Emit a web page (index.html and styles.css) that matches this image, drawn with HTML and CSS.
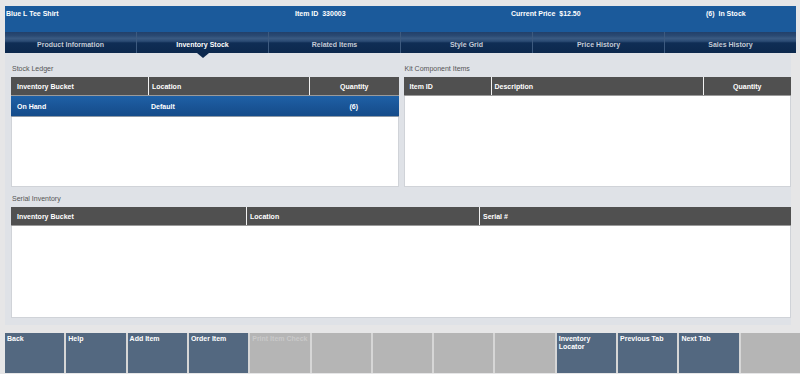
FILE: index.html
```html
<!DOCTYPE html>
<html>
<head>
  <meta charset="utf-8">
  <link rel="stylesheet" href="styles.css">
</head>
<body>
  <div class="top">
    <div class="header">
      <span class="item-name">Blue L Tee Shirt</span>
      <span>Item ID&nbsp;&nbsp;330003</span>
      <span>Current Price&nbsp;&nbsp;$12.50</span>
      <span>(6)&nbsp;&nbsp;In Stock</span>
    </div>
    <div class="tabs">
      <div class="tab">Product Information</div>
      <div class="tab active">Inventory Stock</div>
      <div class="tab">Related Items</div>
      <div class="tab">Style Grid</div>
      <div class="tab">Price History</div>
      <div class="tab">Sales History</div>
    </div>
  </div>

  <div class="content">
    <div class="split">
      <div class="panel">
        <div class="section-label">Stock Ledger</div>
        <div class="grid-table ledger">
          <div class="grid-head">
            <div class="cell">Inventory Bucket</div>
            <div class="cell">Location</div>
            <div class="cell center">Quantity</div>
          </div>
          <div class="grid-body">
            <div class="grid-row selected">
              <div class="cell">On Hand</div>
              <div class="cell">Default</div>
              <div class="cell center">(6)</div>
            </div>
          </div>
        </div>
      </div>
      <div class="panel">
        <div class="section-label">Kit Component Items</div>
        <div class="grid-table kit">
          <div class="grid-head">
            <div class="cell">Item ID</div>
            <div class="cell">Description</div>
            <div class="cell center">Quantity</div>
          </div>
          <div class="grid-body"></div>
        </div>
      </div>
    </div>

    <div class="section-label serial-label">Serial Inventory</div>
    <div class="grid-table serial">
      <div class="grid-head">
        <div class="cell">Inventory Bucket</div>
        <div class="cell">Location</div>
        <div class="cell">Serial #</div>
      </div>
      <div class="grid-body"></div>
    </div>
  </div>

  <div class="buttons">
    <div class="btn">Back</div>
    <div class="btn">Help</div>
    <div class="btn">Add Item</div>
    <div class="btn">Order Item</div>
    <div class="btn disabled">Print Item Check</div>
    <div class="btn disabled"></div>
    <div class="btn disabled"></div>
    <div class="btn disabled"></div>
    <div class="btn disabled"></div>
    <div class="btn">Inventory Locator</div>
    <div class="btn">Previous Tab</div>
    <div class="btn">Next Tab</div>
    <div class="btn disabled"></div>
  </div>
</body>
</html>
```

FILE: styles.css
```css
body {
  margin: 0;
  height: 374px;
  overflow: hidden;
  background: #e6e6e7;
  font-family: "Liberation Sans", Arial, sans-serif;
  font-size: 7px;
  color: #333;
}

.top {
  margin: 6px 4px 0 5px;
}

.header {
  height: 26px;
  box-sizing: border-box;
  padding: 3px 0 0 1px;
  background: #1b5a9b;
  color: white;
  font-weight: bold;
  line-height: 9px;
  display: grid;
  grid-template-columns: 289px 216px 195px 1fr;
}

.tabs {
  display: flex;
  height: 21px;
  background: linear-gradient(#22406a 0%, #2a4a73 18%, #3a5a82 30%, #2b4b74 44%, #0f2d55 52%, #0c284d 100%);
}

.tab {
  position: relative;
  flex: 1;
  display: flex;
  align-items: center;
  justify-content: center;
  padding-top: 3px;
  color: #c3cad5;
  font-weight: bold;
  border-left: 1px solid #3d5a7f;
}

.tab:first-child {
  border-left: none;
}

.tab.active {
  color: white;
}

.tab.active::after {
  content: "";
  position: absolute;
  left: 50%;
  bottom: -5px;
  margin-left: -6px;
  border-left: 6px solid transparent;
  border-right: 6px solid transparent;
  border-top: 5px solid #0c284d;
}

.content {
  margin: 0 9px 0 5px;
  padding: 0 0 7px 6px;
  background: #dfe2e7;
}

.split {
  display: grid;
  grid-template-columns: 1fr 1fr;
  gap: 5px;
}

.section-label {
  padding: 11px 0 4px 1px;
  line-height: 9px;
  color: #555;
}

.serial-label {
  padding-top: 7px;
}

.grid-table {
  background: white;
  display: flex;
  flex-direction: column;
}

.ledger, .kit {
  height: 110px;
}

.serial {
  height: 111px;
}

.grid-body {
  flex: 1;
  border: 1px solid #d0d3d8;
  border-top: none;
}

.grid-head, .grid-row {
  display: grid;
  color: white;
  font-weight: bold;
}

.grid-head {
  height: 18px;
  background: #505050;
  border-bottom: 1px solid #9a9a9a;
}

.grid-head .cell + .cell {
  border-left: 1px solid #f2f2f2;
}

.cell {
  display: flex;
  align-items: center;
  padding: 0 3px;
  white-space: nowrap;
}

.cell:first-child {
  padding-left: 6px;
}

.cell.center {
  justify-content: center;
}

.ledger .grid-head, .ledger .grid-row {
  grid-template-columns: 137px 161px 1fr;
}

.kit .grid-head {
  grid-template-columns: 87px 212px 1fr;
}

.serial .grid-head {
  grid-template-columns: 235px 233px 1fr;
}

.grid-row.selected {
  height: 20px;
  background: linear-gradient(#1f61a6, #1a5597 50%, #154c8a);
  border-bottom: 1px solid #8d99a6;
  margin: 0 -1px;
}

.buttons {
  margin: 8px 0 0 5px;
  height: 40px;
  display: grid;
  grid-template-columns: repeat(13, 1fr);
  gap: 2px;
  background: #d6d6d6;
}

.btn {
  background: #536880;
  color: white;
  font-weight: bold;
  padding: 2px 2px;
  line-height: 8px;
}

.btn.disabled {
  background: #b5b5b5;
  color: #c9c9c9;
}
```
